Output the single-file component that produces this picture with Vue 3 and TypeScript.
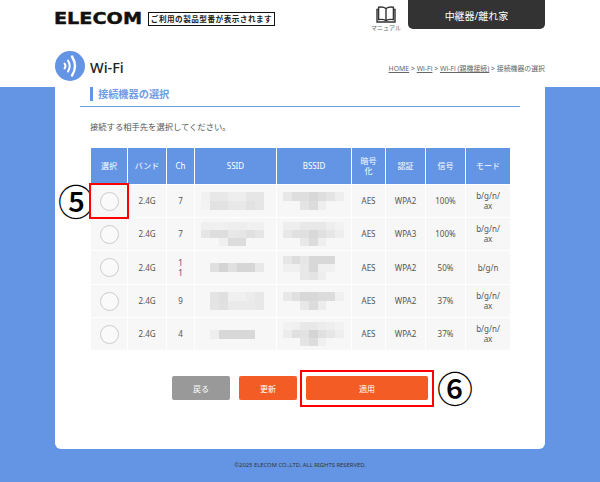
<template>
  <div class="page">
    <header class="header">
      <div class="topbar">
        <div class="brand">
          <span class="logo">ELECOM</span>
          <span class="model">ご利用の製品型番が表示されます</span>
        </div>
        <div class="tools">
          <div class="manual">
            <svg width="20" height="17" viewBox="0 0 20 17" fill="none" stroke="#333" stroke-width="1.4">
              <path d="M10 2.5C8 1 5 .8 2.6 1.2V13.6C5 13.2 8 13.4 10 14.6C12 13.4 15 13.2 17.4 13.6V1.2C15 .8 12 1 10 2.5Z" />
              <path d="M10 2.5V14.6" />
              <path d="M2.6 3.5H1V16H19V3.5H17.4" />
            </svg>
            <span>マニュアル</span>
          </div>
          <div class="mode-tab">中継器/離れ家</div>
        </div>
      </div>
      <div class="titlebar">
        <div class="title">
          <svg width="30" height="30" viewBox="0 0 30 30">
            <circle cx="15" cy="15" r="15" fill="#6495e4" />
            <g fill="none" stroke="#fff" stroke-width="2" stroke-linecap="round">
              <path d="M9.5 12.5Q11.5 15 9.5 17.5" />
              <path d="M13 9.5Q16.5 15 13 20.5" />
              <path d="M17 5.5Q23 15 17 24.5" stroke-width="2.4" />
            </g>
          </svg>
          <h1>Wi-Fi</h1>
        </div>
        <nav class="crumbs">
          <a>HOME</a> &gt; <a>Wi-Fi</a> &gt; <a>Wi-Fi (親機接続)</a> &gt; 接続機器の選択
        </nav>
      </div>
    </header>

    <main class="main">
      <section class="card">
        <h2 class="section-title"><span>接続機器の選択</span></h2>
        <p class="lead">接続する相手先を選択してください。</p>

        <div class="table-wrap">
          <span class="mark mark-five">⑤</span>
          <table class="ap-table">
            <colgroup>
              <col v-for="w in colWidths" :key="w.id" :style="{ width: w.px + 'px' }" />
            </colgroup>
            <thead>
              <tr>
                <th v-for="h in headers" :key="h">{{ h }}</th>
              </tr>
            </thead>
            <tbody>
              <tr v-for="(row, i) in rows" :key="i">
                <td :class="{ picked: i === 0 }"><span class="radio"></span></td>
                <td>2.4G</td>
                <td>{{ row.ch }}</td>
                <td>
                  <div class="mosaic" :class="{ tall: row.ssid.length > 2 }">
                    <template v-for="(line, l) in row.ssid" :key="l">
                      <i v-for="(v, c) in line" :key="c" :style="{ background: gray(v) }"></i>
                    </template>
                  </div>
                </td>
                <td>
                  <div class="mosaic narrow" :class="{ tall: row.bssid.length > 2 }">
                    <template v-for="(line, l) in row.bssid" :key="l">
                      <i v-for="(v, c) in line" :key="c" :style="{ background: gray(v) }"></i>
                    </template>
                  </div>
                </td>
                <td>AES</td>
                <td>{{ row.auth }}</td>
                <td>{{ row.signal }}</td>
                <td>{{ row.mode }}</td>
              </tr>
            </tbody>
          </table>
        </div>

        <div class="actions">
          <button class="btn btn-back">戻る</button>
          <button class="btn btn-main">更新</button>
          <div class="apply-box">
            <button class="btn btn-main btn-apply">適用</button>
            <span class="mark mark-six">⑥</span>
          </div>
        </div>
      </section>
      <footer class="footer">©2025 ELECOM CO.,LTD. ALL RIGHTS RESERVED.</footer>
    </main>
  </div>
</template>

<script setup lang="ts">
const headers: string[] = ["選択", "バンド", "Ch", "SSID", "BSSID", "暗号\n化", "認証", "信号", "モード"];

const colWidths = [36, 38, 27, 81, 74, 33, 39, 39, 44].map((px, id) => ({ id, px }));

// blurred out in the original, 0 = no block
const rows = [
  {
    ch: "7",
    ssid: [
      [0xf1, 0xe8, 0xe8, 0xee, 0xee, 0xe6, 0xe6],
      [0xf3, 0xe2, 0xe2, 0xe8, 0xe8, 0xe2, 0xe6],
    ],
    bssid: [
      [0xe8, 0xde, 0xde, 0xd8, 0xde, 0xe4, 0xee],
      [0, 0, 0xe4, 0xdc, 0xee, 0, 0],
    ],
    auth: "WPA2",
    signal: "100%",
    mode: "b/g/n/\nax",
  },
  {
    ch: "7",
    ssid: [
      [0xf0, 0xf0, 0xf0, 0xee, 0xee, 0xf0, 0xf0],
      [0xe6, 0xde, 0xde, 0xe8, 0xe6, 0xe0, 0xe6],
      [0, 0, 0xf0, 0xdc, 0xdc, 0, 0],
    ],
    bssid: [
      [0xee, 0xee, 0xe8, 0xe8, 0xe8, 0xee, 0xf2],
      [0xe8, 0xe0, 0xe0, 0xd8, 0xe0, 0xe6, 0xee],
      [0, 0, 0xe8, 0xdc, 0xee, 0, 0],
    ],
    auth: "WPA3",
    signal: "100%",
    mode: "b/g/n/\nax",
  },
  {
    ch: "1\n1",
    ssid: [[0, 0xe0, 0xd4, 0xe0, 0xd6, 0xd6, 0xe8]],
    bssid: [
      [0xe6, 0xdc, 0xe6, 0xd8, 0xd8, 0xd8, 0],
      [0xf0, 0xf0, 0xe8, 0xd8, 0xf0, 0xf0, 0],
      [0, 0, 0xe8, 0xe4, 0xee, 0, 0],
    ],
    auth: "WPA2",
    signal: "50%",
    mode: "b/g/n",
  },
  {
    ch: "9",
    ssid: [
      [0, 0xe4, 0xe0, 0xf0, 0xf0, 0xec, 0xe8],
      [0, 0xe4, 0xe0, 0xea, 0xea, 0xea, 0xe8],
    ],
    bssid: [
      [0xe8, 0xe0, 0xd8, 0xd8, 0xdc, 0xdc, 0xf0],
      [0, 0, 0xe8, 0xdc, 0xec, 0, 0],
    ],
    auth: "WPA2",
    signal: "37%",
    mode: "b/g/n/\nax",
  },
  {
    ch: "4",
    ssid: [[0, 0xee, 0xd8, 0xd8, 0xd8, 0xd8, 0]],
    bssid: [
      [0xf2, 0xf0, 0xe8, 0xe8, 0xec, 0xee, 0xf2],
      [0xec, 0xe0, 0xe2, 0xd4, 0xe0, 0xe6, 0xee],
      [0, 0, 0xe4, 0xdc, 0xf0, 0, 0],
    ],
    auth: "WPA2",
    signal: "37%",
    mode: "b/g/n/\nax",
  },
];

function gray(v: number): string {
  return v === 0 ? "transparent" : `rgb(${v},${v},${v})`;
}
</script>

<style>
html,
body {
  margin: 0;
  background: #fff;
}
</style>

<style scoped>
.page {
  width: 600px;
  height: 482px;
  display: flex;
  flex-direction: column;
  font-family: "Noto Sans", "Noto Sans CJK JP", sans-serif;
  color: #555;
  overflow: hidden;
}

.header {
  height: 87px;
  padding: 0 55px;
  box-sizing: border-box;
  background: #fff;
}

.topbar {
  display: flex;
  justify-content: space-between;
  height: 51px;
}

.brand {
  display: flex;
  align-items: center;
  height: 38px;
}

.logo {
  width: 93px;
  margin-left: -1px;
  margin-right: 1px;
  font-family: "DejaVu Sans", sans-serif;
  font-size: 16px;
  font-weight: 700;
  line-height: 16px;
  color: #111;
  -webkit-text-stroke: 0.4px #111;
  transform: scaleX(1.2);
  transform-origin: left center;
}

.model {
  box-sizing: border-box;
  width: 127px;
  height: 14px;
  border: 1.5px solid #111;
  font-family: "Noto Sans CJK JP", sans-serif;
  font-size: 7.6px;
  font-weight: 700;
  line-height: 12px;
  letter-spacing: 0.5px;
  text-align: center;
  color: #222;
  white-space: nowrap;
}

.tools {
  display: flex;
  gap: 7px;
  align-items: flex-start;
}

.manual {
  width: 30px;
  padding-top: 6px;
  display: flex;
  flex-direction: column;
  align-items: center;
  gap: 1px;
  font-size: 6px;
  line-height: 8px;
  color: #666;
  white-space: nowrap;
}

.mode-tab {
  width: 137px;
  height: 29px;
  background: #333;
  border-radius: 0 0 5px 5px;
  color: #fff;
  font-size: 10px;
  line-height: 32px;
  text-align: center;
}

.titlebar {
  display: flex;
  justify-content: space-between;
  align-items: center;
  height: 30px;
}

.title {
  display: flex;
  align-items: center;
  gap: 5px;
}

.title h1 {
  margin: 2px 0 0;
  font-size: 14.5px;
  font-weight: 500;
  color: #222;
}

.crumbs {
  padding-top: 4px;
  font-size: 6.9px;
  color: #666;
  white-space: nowrap;
}

.crumbs a {
  text-decoration: underline;
}

.main {
  flex: 1;
  display: flex;
  flex-direction: column;
  background: #6495e4;
}

.card {
  height: 362px;
  margin: 0 55px;
  background: #fff;
  border-radius: 0 0 6px 6px;
}

.section-title {
  margin: 0 25px;
  height: 19px;
  border-bottom: 1px solid #6d9be6;
  font-size: 10.2px;
  font-weight: 700;
  color: #6f9de6;
}

.section-title span {
  display: block;
  height: 14px;
  margin-left: 10px;
  padding-left: 5px;
  border-left: 3px solid #6495e4;
  line-height: 14px;
}

.lead {
  margin: 14px 0 0 35px;
  font-size: 8.3px;
  line-height: 12px;
}

.table-wrap {
  position: relative;
  margin: 14px 0 0 35px;
}

.ap-table {
  table-layout: fixed;
  width: 421px;
  border-collapse: separate;
  border-spacing: 1px;
  font-size: 8px;
  line-height: 10px;
  text-align: center;
  white-space: pre-line;
}

.ap-table th {
  height: 36px;
  padding: 0;
  background: #6495e4;
  color: #fff;
  font-weight: 400;
}

.ap-table td {
  position: relative;
  height: 32px;
  padding: 0;
  background: #f7f7f7;
}

.ap-table tr:nth-child(3) td {
  height: 33px;
}

.picked {
  outline: 2px solid #f00;
  outline-offset: 0;
  z-index: 1;
}

.radio {
  display: block;
  box-sizing: border-box;
  width: 19px;
  height: 19px;
  margin: 0 auto;
  border: 1px solid #ccc;
  border-radius: 50%;
  background: #fafafa;
}

.mosaic {
  display: grid;
  grid-template-columns: repeat(7, 9px);
  grid-auto-rows: 9px;
  margin-left: 6px;
}

.mosaic.narrow {
  grid-template-columns: repeat(7, 8.7px);
}

.mosaic.tall {
  grid-auto-rows: 8px;
}

.mark {
  position: absolute;
  font-family: "Noto Sans CJK JP", sans-serif;
  font-size: 36px;
  font-weight: 500;
  line-height: 36px;
  color: #000;
}

.mark-five {
  left: -32px;
  top: 35px;
}

.mark-six {
  left: 131px;
  top: -7px;
}

.actions {
  display: flex;
  justify-content: flex-start;
  gap: 9px;
  margin: 25px 0 0 117px;
}

.btn {
  height: 24px;
  width: 58px;
  padding: 0;
  border: none;
  border-radius: 2px;
  font-family: inherit;
  font-size: 8px;
  color: #fff;
}

.btn-back {
  background: #999;
}

.btn-main {
  background: #f45c25;
}

.apply-box {
  position: relative;
}

.btn-apply {
  display: block;
  width: 122px;
}

.apply-box::before {
  content: "";
  position: absolute;
  inset: -6px -6px -7px -6px;
  border: 2px solid #f00;
}

.footer {
  flex: 1;
  font-size: 5.85px;
  line-height: 33px;
  text-align: center;
  color: #333;
}
</style>
